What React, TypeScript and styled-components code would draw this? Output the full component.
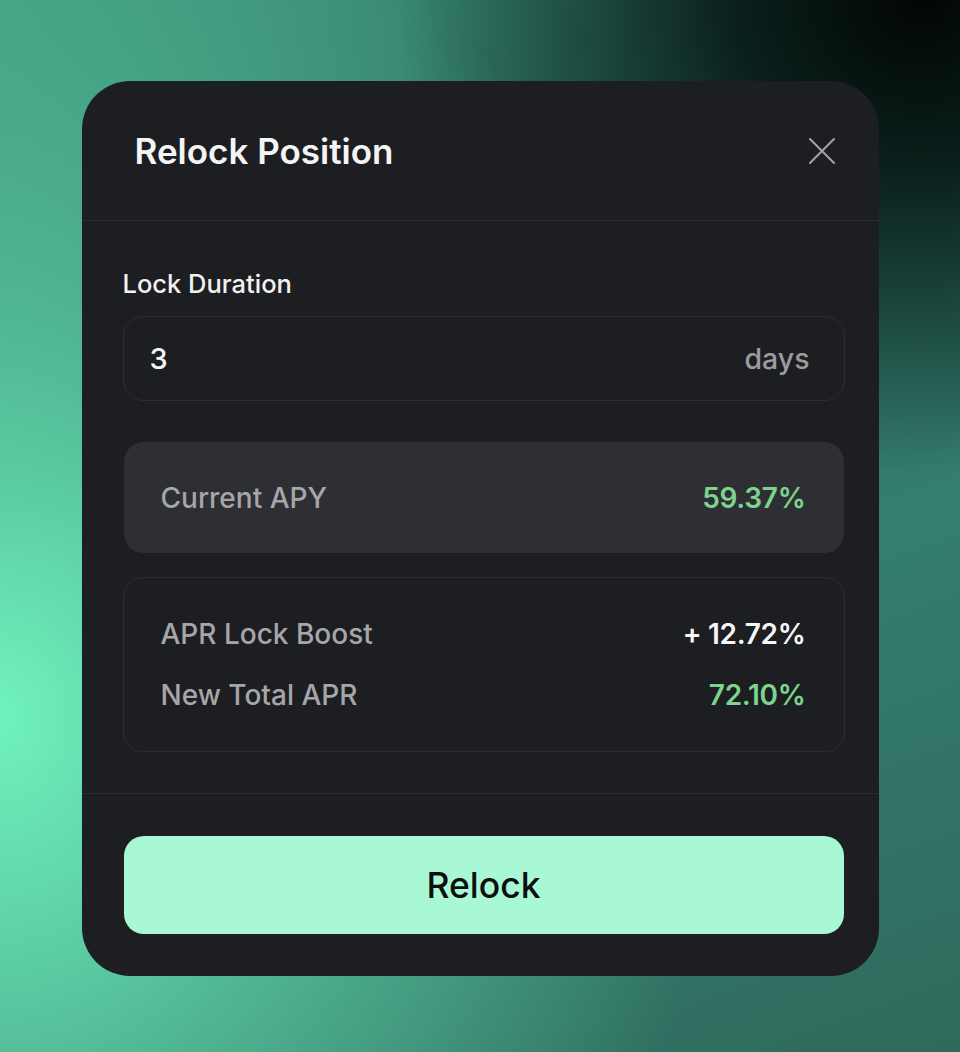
import styled, { createGlobalStyle } from 'styled-components'

const GlobalStyle = createGlobalStyle`
  html, body {
    margin: 0;
    padding: 0;
  }
  body {
    font-family: Inter, "Noto Sans", sans-serif;
    -webkit-font-smoothing: antialiased;
  }
`

export default function App() {
  return (
    <Page>
      <GlobalStyle/>
      <Modal>
        <Header>
          <Title>Relock Position</Title>
          <CloseButton aria-label='Close'>
            <svg width='26' height='26' viewBox='0 0 26 26' fill='none'>
              <path d='M1 1L25 25M25 1L1 25' stroke='currentColor' strokeWidth='2' strokeLinecap='round'/>
            </svg>
          </CloseButton>
        </Header>

        <Body>
          <Label>Lock Duration</Label>
          <InputBox>
            <Value>3</Value>
            <Unit>days</Unit>
          </InputBox>

          <ApyCard>
            <Row>
              <RowLabel>Current APY</RowLabel>
              <RowValue tone='green'>59.37%</RowValue>
            </Row>
          </ApyCard>

          <BoostCard>
            <Row>
              <RowLabel>APR Lock Boost</RowLabel>
              <RowValue tone='white'>+ 12.72%</RowValue>
            </Row>
            <Row>
              <RowLabel>New Total APR</RowLabel>
              <RowValue tone='green'>72.10%</RowValue>
            </Row>
          </BoostCard>
        </Body>

        <Footer>
          <PrimaryButton>Relock</PrimaryButton>
        </Footer>
      </Modal>
    </Page>
  )
}

const Page = styled.div`
  min-height: 1052px;
  box-sizing: border-box;
  display: flex;
  justify-content: center;
  align-items: flex-start;
  padding-top: 81px;
  background:
    radial-gradient(ellipse 55% 45% at 96% 0%, #020605 0%, #0a1f1b 35%, rgba(10, 31, 27, 0) 100%),
    radial-gradient(ellipse 75% 85% at 0% 68%, #70f2bd 0%, rgba(104, 232, 182, 0.55) 45%, rgba(104, 232, 182, 0) 100%),
    linear-gradient(160deg, #3f957c 0%, #2b6b5d 35%, #357e6f 60%, #2e6a5c 100%);
`

const Modal = styled.div`
  width: 797px;
  display: flex;
  flex-direction: column;
  background: #1d1e22;
  border-radius: 48px;
  overflow: hidden;
`

const Header = styled.div`
  height: 140px;
  box-sizing: border-box;
  display: flex;
  align-items: center;
  justify-content: space-between;
  padding: 0 44px 0 53px;
  border-bottom: 1px solid #2b2c30;
`

const Title = styled.h2`
  margin: 0;
  font-size: 35px;
  font-weight: 600;
  color: #f4f4f5;
`

const CloseButton = styled.button`
  display: flex;
  padding: 0;
  border: none;
  background: none;
  color: #a3a3a6;
  cursor: pointer;
`

const Body = styled.div`
  display: flex;
  flex-direction: column;
  padding: 45px 34px 41px 41px;
  border-bottom: 1px solid #2b2c30;
`

const Label = styled.div`
  font-size: 25.5px;
  line-height: 36px;
  font-weight: 500;
  color: #f2f2f3;
  margin-bottom: 14px;
`

const InputBox = styled.div`
  height: 85px;
  box-sizing: border-box;
  display: flex;
  align-items: center;
  justify-content: space-between;
  padding: 0 34px 0 26px;
  border: 1.5px solid #2d2e32;
  border-radius: 20px;
  margin-bottom: 41px;
`

const Value = styled.span`
  font-size: 29px;
  font-weight: 500;
  color: #f4f4f5;
`

const Unit = styled.span`
  font-size: 28.5px;
  font-weight: 500;
  color: #9b9b9e;
`

const ApyCard = styled.div`
  height: 111px;
  box-sizing: border-box;
  display: flex;
  flex-direction: column;
  justify-content: center;
  padding: 0 38px 0 37px;
  background: #2e2f34;
  border-radius: 20px;
  margin: 0 1px 24px 1px;
`

const BoostCard = styled.div`
  display: flex;
  flex-direction: column;
  gap: 25px;
  padding: 38px 38px 38px 37px;
  border: 1.5px solid #2c2d31;
  border-radius: 20px;
`

const Row = styled.div`
  display: flex;
  align-items: center;
  justify-content: space-between;
  height: 36px;
`

const RowLabel = styled.span`
  font-size: 28px;
  font-weight: 500;
  color: #a6a6a9;
`

const RowValue = styled.span<{ tone: 'green' | 'white' }>`
  font-size: 28px;
  font-weight: 600;
  letter-spacing: -0.3px;
  color: ${props => props.tone === 'green' ? '#7dd48c' : '#f6f6f7'};
`

const Footer = styled.div`
  padding: 42px 35px 42px 42px;
`

const PrimaryButton = styled.button`
  width: 100%;
  height: 98px;
  display: flex;
  align-items: center;
  justify-content: center;
  border: none;
  border-radius: 20px;
  background: #a8f8d6;
  font-family: Inter, "Noto Sans", sans-serif;
  font-size: 35.5px;
  font-weight: 500;
  color: #0d0e10;
  cursor: pointer;
`
